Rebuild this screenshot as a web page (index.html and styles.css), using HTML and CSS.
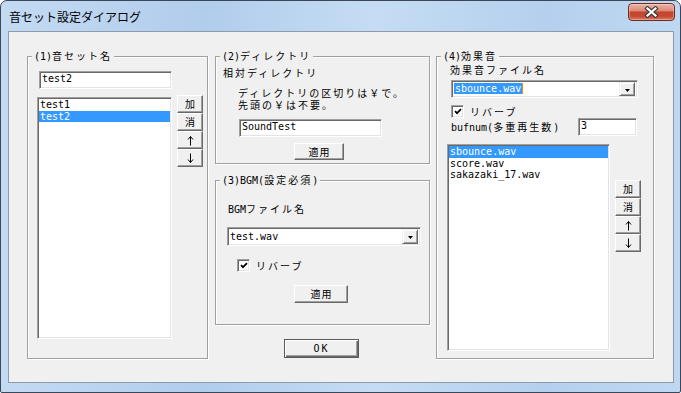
FILE: index.html
```html
<!DOCTYPE html>
<html lang="ja">
<head>
  <meta charset="UTF-8" />
  <title>音セット設定ダイアログ</title>
  <link rel="stylesheet" href="styles.css">
</head>
<body>
  <div class="window">
    <div class="titlebar">
      <span class="caption">音セット設定ダイアログ</span>
      <div class="close">
        <svg width="15" height="12" viewBox="0 0 15 12">
          <path d="M3.5 2.5 L11.5 9.5 M11.5 2.5 L3.5 9.5" stroke="#3d3d3d" stroke-width="4.4" stroke-linecap="square" fill="none"/>
          <path d="M3.5 2.5 L11.5 9.5 M11.5 2.5 L3.5 9.5" stroke="#fff" stroke-width="2.2" stroke-linecap="square" fill="none"/>
        </svg>
      </div>
    </div>

    <div class="client">
      <!-- (1) sound set name -->
      <div class="group g1">
        <span class="legend">(1)<span class="jp">音セット名</span></span>
        <div class="edit name-edit">test2</div>
        <div class="list-row">
          <div class="listbox lb-sets">
            <div class="item">test1</div>
            <div class="item sel">test2</div>
          </div>
          <div class="side-btns">
            <button class="btn side"><span class="jp">加</span></button>
            <button class="btn side"><span class="jp">消</span></button>
            <button class="btn side"><svg width="7" height="11" viewBox="0 0 7 11"><path d="M3.5 1.5 V10.5 M1 4.5 L3.5 1.5 L6 4.5" stroke="#000" stroke-width="1" fill="none"/></svg></button>
            <button class="btn side"><svg width="7" height="11" viewBox="0 0 7 11"><path d="M3.5 0.5 V9.5 M1 6.5 L3.5 9.5 L6 6.5" stroke="#000" stroke-width="1" fill="none"/></svg></button>
          </div>
        </div>
      </div>

      <div class="col-mid">
        <!-- (2) directory -->
        <div class="group g2">
          <span class="legend">(2)<span class="jp">ディレクトリ</span></span>
          <div class="lbl"><span class="jp">相対ディレクトリ</span></div>
          <div class="note">
            <div class="jp">ディレクトリの区切りは￥で。</div>
            <div class="jp">先頭の￥は不要。</div>
          </div>
          <div class="edit dir-edit">SoundTest</div>
          <button class="btn apply-dir"><span class="jp">適用</span></button>
        </div>

        <!-- (3) BGM -->
        <div class="group g3">
          <span class="legend">(3)BGM(<span class="jp">設定必須</span>)</span>
          <div class="lbl bgm-lbl">BGM<span class="jp">ファイル名</span></div>
          <div class="combo bgm-combo">
            <span class="combo-text">test.wav</span>
            <span class="drop"><svg width="5" height="3" viewBox="0 0 5 3"><path d="M0 0h5l-2.5 3z" fill="#000"/></svg></span>
          </div>
          <div class="cb-row bgm-cb">
            <span class="cb"><svg width="8" height="7" viewBox="0 0 8 7"><path d="M1 3.2 L3 5.2 L7 1.2" stroke="#000" stroke-width="1.8" fill="none"/></svg></span>
            <span class="cb-label jp">リバーブ</span>
          </div>
          <button class="btn apply-bgm"><span class="jp">適用</span></button>
        </div>

        <button class="btn ok">OK</button>
      </div>

      <!-- (4) sound effects -->
      <div class="group g4">
        <span class="legend">(4)<span class="jp">効果音</span></span>
        <div class="lbl se-lbl"><span class="jp">効果音ファイル名</span></div>
        <div class="combo se-combo">
          <span class="combo-text"><span class="hl">sbounce.wav</span></span>
          <span class="drop"><svg width="5" height="3" viewBox="0 0 5 3"><path d="M0 0h5l-2.5 3z" fill="#000"/></svg></span>
        </div>
        <div class="cb-row se-cb">
          <span class="cb"><svg width="8" height="7" viewBox="0 0 8 7"><path d="M1 3.2 L3 5.2 L7 1.2" stroke="#000" stroke-width="1.8" fill="none"/></svg></span>
          <span class="cb-label jp">リバーブ</span>
        </div>
        <div class="buf-row">
          <span>bufnum(<span class="jp">多重再生数</span>)</span>
          <div class="edit buf-edit">3</div>
        </div>
        <div class="list-row se-row">
          <div class="listbox lb-se">
            <div class="item sel">sbounce.wav</div>
            <div class="item">score.wav</div>
            <div class="item">sakazaki_17.wav</div>
          </div>
          <div class="side-btns se-btns">
            <button class="btn side"><span class="jp">加</span></button>
            <button class="btn side"><span class="jp">消</span></button>
            <button class="btn side"><svg width="7" height="11" viewBox="0 0 7 11"><path d="M3.5 1.5 V10.5 M1 4.5 L3.5 1.5 L6 4.5" stroke="#000" stroke-width="1" fill="none"/></svg></button>
            <button class="btn side"><svg width="7" height="11" viewBox="0 0 7 11"><path d="M3.5 0.5 V9.5 M1 6.5 L3.5 9.5 L6 6.5" stroke="#000" stroke-width="1" fill="none"/></svg></button>
          </div>
        </div>
      </div>
    </div>
  </div>
</body>
</html>
```

FILE: styles.css
```css
body { margin: 0; background: #fff; font-family: "DejaVu Sans Mono", "Noto Sans CJK JP", monospace; font-size: 10px; color: #000; }
.jp { font-family: "Noto Sans CJK JP", sans-serif; letter-spacing: 2px; }

/* window frame */
.window { width: 681px; height: 393px; box-sizing: border-box; border: 1px solid #3a4758; border-radius: 7px 7px 2px 2px; overflow: hidden;
  background: linear-gradient(to right, #c3daf3, #b1cdec 30%, #c5dcf4 55%, #b5d0ee 80%, #bfd8f2); }
.titlebar { height: 30px; display: flex; justify-content: space-between; align-items: flex-start; }
.caption { margin: 8px 0 0 8px; font: 12px/15px "Noto Sans CJK JP", sans-serif; color: #000; }
.close { width: 47px; height: 18px; box-sizing: border-box; margin: 2px 5px 0 0; border: 1px solid #6e2b22; border-radius: 4px; display: flex; align-items: center; justify-content: center;
  background: linear-gradient(#ebb3a6, #dc8a78 42%, #c5452e 50%, #c74a32 78%, #dc7d66); box-shadow: inset 0 0 0 1px rgba(255,255,255,.3); }

.client { margin-left: 7px; width: 666px; height: 352px; box-sizing: border-box; border: 1px solid #8e9bab; background: #f0f0f0; padding: 24px 0 0 18px; display: flex; align-items: flex-start; }

/* group boxes */
.group { position: relative; box-sizing: border-box; border: 1px solid #a0a0a0; box-shadow: inset 1px 1px 0 #fff, 1px 1px 0 #fff; line-height: 12px; }
.legend { position: absolute; top: -7px; left: 4px; padding: 0 2px; background: #f0f0f0; line-height: 12px; white-space: nowrap; }
.g1 { width: 181px; height: 303px; padding: 14px 0 0 9px; }
.col-mid { margin-left: 7px; width: 215px; }
.g2 { height: 108px; padding: 10px 0 0 7px; }
.g3 { height: 145px; margin-top: 16px; padding: 22px 0 0 11px; }
.g4 { width: 218px; height: 303px; margin-left: 6px; padding: 7px 0 0 10px; }

/* controls */
.edit, .listbox, .combo, .cb { box-sizing: border-box; background: #fff; border: 1px solid; border-color: #a0a0a0 #fff #fff #a0a0a0; box-shadow: inset 1px 1px 0 #696969, inset -1px -1px 0 #e3e3e3; }
.edit { padding: 1px 0 0 2px; line-height: 11px; white-space: nowrap; }
.btn { box-sizing: border-box; margin: 0; padding: 0; background: #f0f0f0; border: 1px solid; border-color: #fff #696969 #696969 #fff; box-shadow: inset -1px -1px 0 #a0a0a0;
  font: inherit; color: #000; display: flex; align-items: center; justify-content: center; line-height: 12px; }
.btn .jp { letter-spacing: 1px; margin-right: -1px; }

.name-edit { margin-left: 2px; width: 133px; height: 18px; }
.list-row { display: flex; align-items: flex-start; margin-top: 6px; }
.listbox { padding: 1px 1px 0 1px; }
.lb-sets { width: 135px; height: 242px; margin-top: 2px; }
.item { line-height: 11.5px; padding-left: 1px; white-space: nowrap; }
.item.sel { background: #3399ff; color: #fff; }
.side-btns { display: flex; flex-direction: column; margin-left: 5px; }
.btn.side { width: 26px; height: 18px; }

.lbl { line-height: 12px; white-space: nowrap; }
.note { margin: 7px 0 0 15px; line-height: 12px; white-space: nowrap; }
.dir-edit { margin: 8px 0 0 16px; width: 143px; height: 18px; }
.apply-dir { margin: 6px 0 0 71px; width: 50px; height: 17px; }

.bgm-lbl { margin-left: 1px; }
.combo { display: flex; align-items: center; justify-content: space-between; padding: 1px; }
.combo-text { padding-left: 1px; white-space: nowrap; line-height: 12px; }
.drop { box-sizing: border-box; width: 16px; height: 100%; margin-right: 1px; background: #f0f0f0; border: 1px solid; border-color: #f0f0f0 #696969 #696969 #f0f0f0;
  box-shadow: inset 1px 1px 0 #fff, inset -1px -1px 0 #a0a0a0; display: flex; align-items: center; justify-content: center; padding-top: 2px; }
.bgm-combo { margin-top: 11px; width: 194px; height: 19px; }
.cb-row { display: flex; align-items: center; }
.cb { width: 13px; height: 13px; display: flex; align-items: center; justify-content: center; }
.cb-label { margin-left: 6px; line-height: 12px; }
.bgm-cb { margin: 13px 0 0 10px; }
.apply-bgm { margin: 13px 0 0 67px; width: 54px; height: 18px; }
.ok { margin: 14px 0 0 69px; width: 75px; height: 19px; border: 1px solid #5a5a5a; box-shadow: inset 1px 1px 0 #fff, inset -1px -1px 0 #696969, inset -2px -2px 0 #a0a0a0; letter-spacing: 2px; }

.se-lbl { margin-left: 3px; }
.se-combo { margin: 3px 0 0 4px; width: 187px; height: 18px; }
.hl { background: #3399ff; color: #fff; border-right: 1px solid #ff8a00; padding: 0 1px 0 1px; }
.se-cb { margin: 7px 0 0 4px; }
.buf-row { display: flex; align-items: center; justify-content: space-between; width: 186px; margin-left: 4px; white-space: nowrap; }
.buf-edit { width: 59px; height: 18px; }
.se-row { margin-top: 8px; }
.lb-se { width: 163px; height: 207px; }
.se-btns { margin-top: 36px; }
```
